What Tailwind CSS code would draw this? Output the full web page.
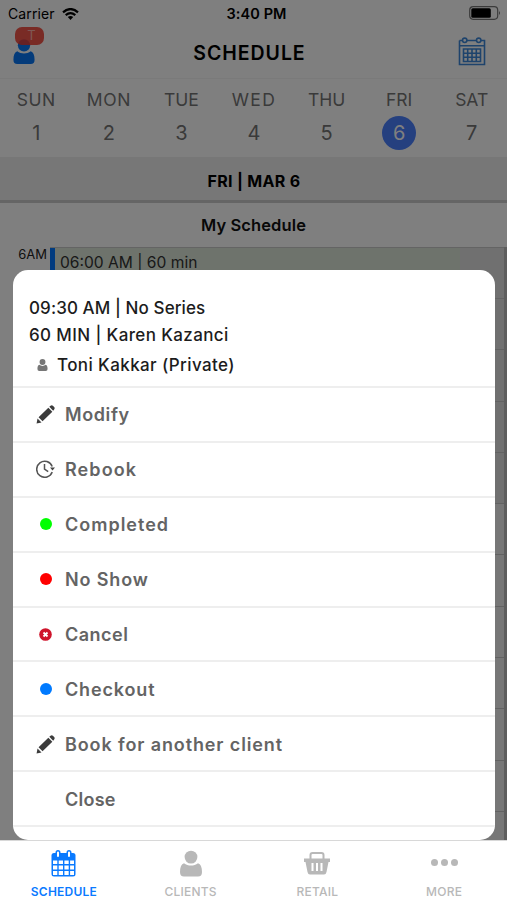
<!DOCTYPE html>
<html lang="en">
<head>
<meta charset="utf-8">
<title>Schedule</title>
<script src="https://cdn.jsdelivr.net/npm/@tailwindcss/browser@4"></script>
</head>
<body class="bg-white font-['Inter',sans-serif]">
<svg class="hidden">
  <symbol id="person" viewBox="0 0 22 26"><circle cx="11" cy="6.6" r="6.4"/><path d="M4 12.7C1.4 13.6 0 16.5 0 21.5Q0 26 4 26H18Q22 26 22 21.5C22 16.500 20.600 13.600 18 12.700C14 15.800 8 15.800 4 12.700Z"/></symbol>
  <symbol id="pencil" viewBox="0 0 20 20"><path d="M.6 19.400L1.600 14.200L5.800 18.300ZM2.700 12.900L13 2.800L17.200 7L6.900 17.200ZM14 1.900L15.300 .8Q16.600 -.2 17.800 .9L19.100 2.200Q20.200 3.400 19.100 4.700L18.100 6Z"/></symbol>
</svg>
<div class="relative h-[900px] w-[507px] overflow-hidden">
  <div class="flex h-[840px] flex-col bg-white">
    <div class="relative flex h-[27px] items-center justify-center text-[14.5px] font-semibold tracking-[0.1px] text-black">
      <div class="absolute left-2 top-0 flex h-[27px] items-center gap-[7px] text-[14px] font-normal">Carrier
        <svg class="h-3 w-[17px]" viewBox="0 0 17 12"><path d="M1 4.300Q8.500-2.200 16 4.300M3.700 7.100Q8.500 3 13.300 7.100" fill="none" stroke="#000" stroke-width="2.200"/><path d="M5.800 9.100Q8.500 7 11.200 9.100L8.500 12Z"/></svg>
      </div>
      <span class="ml-[6px]">3:40 PM</span>
      <svg class="absolute left-[469px] top-[6px] h-[14px] w-8" viewBox="0 0 32 14"><rect x=".7" y=".7" width="28" height="12.600" rx="3.500" fill="none" stroke="#777" stroke-width="1.200"/><rect x="2.300" y="2.300" width="19.500" height="9.400" rx="1.500"/><path d="M30 5Q32 7 30 9Z" fill="#777"/></svg>
    </div>
    <div class="relative flex h-[52px] items-center justify-center border-b border-[#f4f4f4] pt-[2px] text-[19.5px] font-semibold text-black">
      <span class="ml-[-8px] tracking-[0.95px]">SCHEDULE</span>
      <svg class="absolute left-[13px] top-[12px] h-[25px] w-[22px] fill-[#0877f5]"><use href="#person"/></svg>
      <span class="absolute left-[15px] top-0 flex h-[18px] w-[29px] items-center justify-center rounded-[7px] bg-[#f0382c]/85 pl-1 text-[13px] font-normal text-[#ffb0a8]">T</span>
      <svg class="absolute left-[458px] top-[10px] h-[29px] w-[28px]" viewBox="0 0 28 29" fill="none" stroke="#3c87d8" stroke-width="1.600"><path d="M1.500 3.500H4.500M9 3.500H18.500M23 3.500H26.500V27.500H1.500V3.500M1.500 8.700H26.500"/><circle cx="6.700" cy="3.300" r="2.200"/><circle cx="20.700" cy="3.300" r="2.200"/><path d="M5.500 12H22.500V24.500H5.500ZM5.500 16.200H22.500M5.500 20.300H22.500M9.700 12V24.500M14 12V24.500M18.300 12V24.500"/></svg>
    </div>
    <div class="grid h-[78px] w-[508px] shrink-0 grid-cols-7 text-center text-[17.5px] text-[#747474]">
      <div class="flex flex-col items-center pt-[9px]"><span class="h-6 leading-6 tracking-[0.5px]">SUN</span><span class="mt-1 size-[34px] text-[20px] leading-[34px]">1</span></div>
      <div class="flex flex-col items-center pt-[9px]"><span class="h-6 leading-6 tracking-[0.6px]">MON</span><span class="mt-1 size-[34px] text-[20px] leading-[34px]">2</span></div>
      <div class="flex flex-col items-center pt-[9px]"><span class="h-6 leading-6">TUE</span><span class="mt-1 size-[34px] text-[20px] leading-[34px]">3</span></div>
      <div class="flex flex-col items-center pt-[9px]"><span class="h-6 leading-6 tracking-[1.4px]">WED</span><span class="mt-1 size-[34px] text-[20px] leading-[34px]">4</span></div>
      <div class="flex flex-col items-center pt-[9px]"><span class="h-6 leading-6">THU</span><span class="mt-1 size-[34px] text-[20px] leading-[34px]">5</span></div>
      <div class="flex flex-col items-center pt-[9px]"><span class="h-6 leading-6">FRI</span><span class="mt-1 size-[34px] rounded-full bg-[#4a80ff] text-[20px] leading-[34px] text-white">6</span></div>
      <div class="flex flex-col items-center pt-[9px]"><span class="h-6 leading-6">SAT</span><span class="mt-1 size-[34px] text-[20px] leading-[34px]">7</span></div>
    </div>
    <div class="flex h-[46px] shrink-0 items-center justify-center border-b-3 border-[#cacaca] bg-[#eeeeee] pl-px pt-[4px] text-[16px] font-bold tracking-[0.3px] text-black">FRI | MAR 6</div>
    <div class="flex h-[44px] shrink-0 items-center justify-center text-[16.5px] font-semibold tracking-[0.1px] text-[#111]">My Schedule</div>
    <div class="flex flex-1">
      <div class="w-[50px] pr-[3px] text-right text-[13px] leading-[15px] text-[#222]">6AM</div>
      <div class="flex flex-1 flex-col border-r-3 border-[#bdbdbd]">
        <div class="flex h-[52px] shrink-0 border-y border-[#c8c8c8] bg-[#e0e0e0]">
          <div class="w-[410px] border-l-5 border-[#0076ff] bg-[#dce7d8] pl-[5px] pt-[4px] text-[15.6px] leading-[22px] text-[#333]">06:00 AM | 60 min</div>
        </div>
        <div class="h-[51.3px] shrink-0 border-b border-[#c4c4c4] bg-[#e0e0e0]"></div>
        <div class="h-[51.3px] shrink-0 border-b border-[#c4c4c4] bg-[#e0e0e0]"></div>
        <div class="h-[51.3px] shrink-0 border-b border-[#c4c4c4] bg-[#e0e0e0]"></div>
        <div class="h-[51.3px] shrink-0 border-b border-[#c4c4c4] bg-[#e0e0e0]"></div>
        <div class="h-[51.3px] shrink-0 border-b border-[#c4c4c4] bg-[#eeeeee]"></div>
        <div class="h-[51.3px] shrink-0 border-b border-[#c4c4c4] bg-[#eeeeee]"></div>
        <div class="h-[51.3px] shrink-0 border-b border-[#c4c4c4] bg-[#eeeeee]"></div>
        <div class="h-[51.3px] shrink-0 border-b border-[#c4c4c4] bg-[#eeeeee]"></div>
        <div class="h-[51.3px] shrink-0 border-b border-[#c4c4c4] bg-[#eeeeee]"></div>
        <div class="h-[51.3px] shrink-0 border-b border-[#c4c4c4] bg-[#eeeeee]"></div>
        <div class="flex-1 bg-[#eeeeee]"></div>
      </div>
    </div>
  </div>

  <div class="absolute inset-x-0 top-0 flex h-[840px] items-end bg-black/50">
    <div class="ml-[13px] flex h-[570.5px] w-[482px] flex-col overflow-hidden rounded-[15px] bg-white text-[18px] font-semibold text-[#646464]">
      <div class="h-[118.5px] shrink-0 border-b-2 border-[#eeeeee] pl-4 pt-[25px] text-[17px] font-medium leading-[27px] text-[#1c1c1c]">
        <p class="tracking-[0.1px]">09:30 AM | No Series</p>
        <p class="tracking-[0.38px]">60 MIN | Karen Kazanci</p>
        <p class="mt-[3px] flex items-center tracking-[0.4px]"><svg class="ml-2 mr-[9px] h-3 w-[11px] fill-[#777]"><use href="#person"/></svg>Toni Kakkar (Private)</p>
      </div>
      <div class="flex h-[54.9px] shrink-0 items-center border-b-2 border-[#eeeeee]"><span class="flex w-[52px] pl-[23px]"><svg class="size-[19px] fill-[#3c3c3c]"><use href="#pencil"/></svg></span><span class="tracking-[0.6px]">Modify</span></div>
      <div class="flex h-[54.9px] shrink-0 items-center border-b-2 border-[#eeeeee]"><span class="flex w-[52px] pl-[23px]"><svg class="h-[18px] w-[19px]" viewBox="0 0 19 18" fill="none" stroke="#555" stroke-width="1.500"><path d="M16.200 6.500A8 8 0 1 0 16.200 12M8.500 4V9L12.200 11.600"/><path d="M14 7.500H19L16.500 10.500Z" fill="#444" stroke="none"/></svg></span><span class="tracking-[1.1px]">Rebook</span></div>
      <div class="flex h-[54.9px] shrink-0 items-center border-b-2 border-[#eeeeee]"><span class="flex w-[52px] pl-[27px]"><i class="size-3 rounded-full bg-[#00ff00]"></i></span><span class="tracking-[1px]">Completed</span></div>
      <div class="flex h-[54.9px] shrink-0 items-center border-b-2 border-[#eeeeee]"><span class="flex w-[52px] pl-[27px]"><i class="size-3 rounded-full bg-[#ff0000]"></i></span><span class="tracking-[0.85px]">No Show</span></div>
      <div class="flex h-[54.9px] shrink-0 items-center border-b-2 border-[#eeeeee]"><span class="flex w-[52px] pl-[26px]"><svg class="size-[13px]" viewBox="0 0 13 13"><circle cx="6.500" cy="6.500" r="6.300" fill="#cf142b"/><path d="M4.500 4.500L8.500 8.500M8.500 4.500L4.500 8.500" stroke="#fff" stroke-width="1.800"/></svg></span><span class="tracking-[0.5px]">Cancel</span></div>
      <div class="flex h-[54.9px] shrink-0 items-center border-b-2 border-[#eeeeee] pt-px"><span class="flex w-[52px] pl-[27px]"><i class="size-3 rounded-full bg-[#007aff]"></i></span><span class="tracking-[0.85px]">Checkout</span></div>
      <div class="flex h-[54.9px] shrink-0 items-center border-b-2 border-[#eeeeee] pt-px"><span class="flex w-[52px] pl-[23px]"><svg class="size-[19px] fill-[#3c3c3c]"><use href="#pencil"/></svg></span><span class="tracking-[0.88px]">Book for another client</span></div>
      <div class="flex h-[54.9px] shrink-0 items-center border-b-2 border-[#eeeeee] pl-[52px] pt-px"><span class="tracking-[0.25px]">Close</span></div>
    </div>
  </div>

  <nav class="grid h-[60px] w-[507px] grid-cols-4 border-t border-[#d8d8d8] bg-white text-[12px] font-medium text-[#b8b8b8]">
    <div class="flex flex-col items-center pt-[9px] font-semibold text-[#0a7aff]">
      <svg class="h-[27px] w-[25px]" viewBox="0 0 25 27"><path d="M3 3H22Q24.500 3 24.500 5.500V24Q24.500 26.500 22 26.500H3Q.5 26.500 .5 24V5.500Q.5 3 3 3Z" fill="#0a7aff"/><path d="M2 10.500H6.300V14H2ZM7.700 10.500H12V14H7.700ZM13.400 10.500H17.700V14H13.400ZM19.100 10.500H23V14H19.100ZM2 15.400H6.300V19.500H2ZM7.700 15.400H12V19.500H7.700ZM13.400 15.400H17.700V19.500H13.400ZM19.100 15.400H23V19.500H19.100ZM2 20.900H6.300V25H2ZM7.700 20.900H12V25H7.700ZM13.400 20.900H17.700V25H13.400ZM19.100 20.900H23V25H19.100Z" fill="#fff"/><path d="M7 2.500V6M18 2.500V6" stroke="#0a7aff" stroke-width="5" stroke-linecap="round"/><path d="M7 2.500V6M18 2.500V6" stroke="#fff" stroke-width="2" stroke-linecap="round"/></svg>
      <span class="mt-[6px] pl-px tracking-[0.2px]">SCHEDULE</span>
    </div>
    <div class="flex flex-col items-center pl-px pt-[9px]"><svg class="h-[27px] w-[22px] fill-[#b8b8b8]"><use href="#person"/></svg><span class="mt-[6px] tracking-[0.2px]">CLIENTS</span></div>
    <div class="flex flex-col items-center pl-px pt-[9px]">
      <svg class="h-[27px] w-[26px]" viewBox="0 0 26 27"><path d="M6.500 10V5Q6.500 3 8.500 3H17.500Q19.500 3 19.500 5V10" fill="none" stroke="#b8b8b8" stroke-width="2"/><path d="M0 8.500H26V12H24.500L22.500 22Q22 24.500 20 24.500H6Q4 24.500 3.500 22L1.500 12H0Z" fill="#b8b8b8"/><path d="M8.500 13V21M13 13V21M17.500 13V21" stroke="#fff" stroke-width="2"/></svg>
      <span class="mt-[6px] tracking-[0.2px]">RETAIL</span>
    </div>
    <div class="flex flex-col items-center pl-px pt-[9px]"><div class="flex h-[27px] items-center gap-[3px] pb-[2px]"><i class="size-[7px] rounded-full bg-[#b8b8b8]"></i><i class="size-[7px] rounded-full bg-[#b8b8b8]"></i><i class="size-[7px] rounded-full bg-[#b8b8b8]"></i></div><span class="mt-[6px] tracking-[0.3px]">MORE</span></div>
  </nav>
</div>
</body>
</html>
